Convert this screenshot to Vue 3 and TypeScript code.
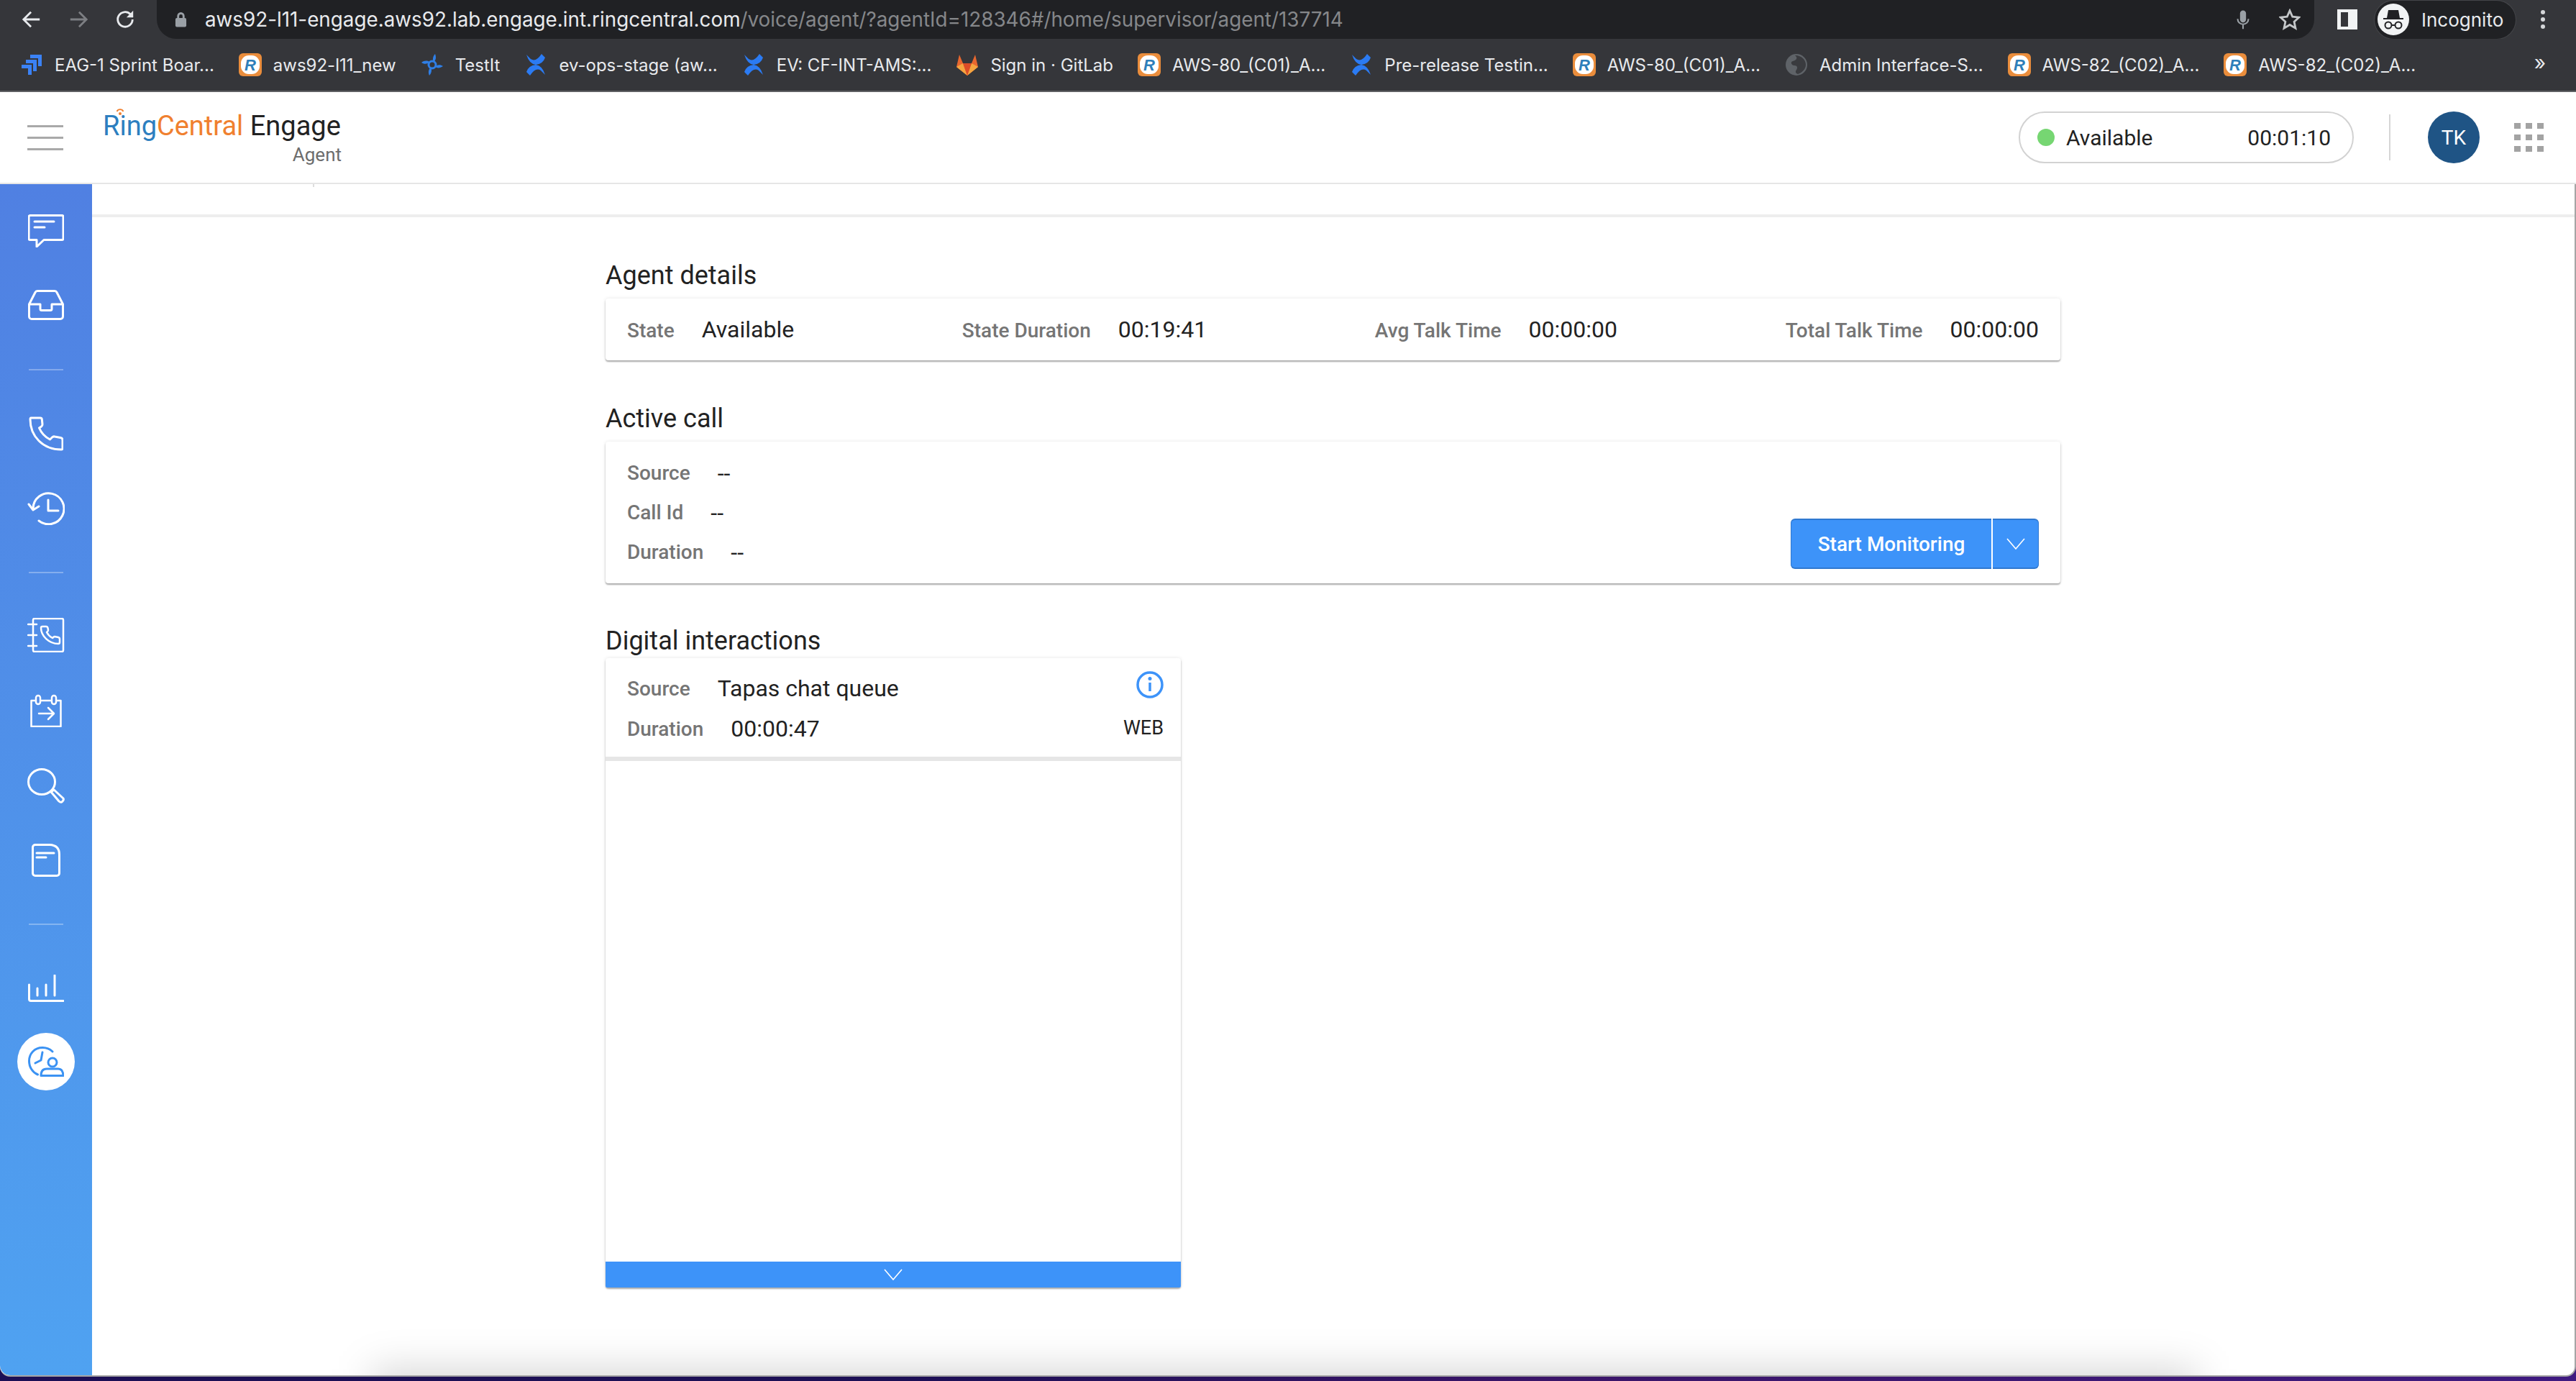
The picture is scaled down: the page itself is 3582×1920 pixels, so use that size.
<script setup lang="ts">
interface Bookmark {
  icon: string
  label: string
}

const bookmarks: Bookmark[] = [
  { icon: 'jira', label: 'EAG-1 Sprint Boar...' },
  { icon: 'rc', label: 'aws92-l11_new' },
  { icon: 'testit', label: 'TestIt' },
  { icon: 'conf', label: 'ev-ops-stage (aw...' },
  { icon: 'conf', label: 'EV: CF-INT-AMS:...' },
  { icon: 'gitlab', label: 'Sign in · GitLab' },
  { icon: 'rc', label: 'AWS-80_(C01)_A...' },
  { icon: 'conf', label: 'Pre-release Testin...' },
  { icon: 'rc', label: 'AWS-80_(C01)_A...' },
  { icon: 'globe', label: 'Admin Interface-S...' },
  { icon: 'rc', label: 'AWS-82_(C02)_A...' },
  { icon: 'rc', label: 'AWS-82_(C02)_A...' },
]

const agentStats = [
  { label: 'State', value: 'Available' },
  { label: 'State Duration', value: '00:19:41' },
  { label: 'Avg Talk Time', value: '00:00:00' },
  { label: 'Total Talk Time', value: '00:00:00' },
]

const callRows = [
  { label: 'Source', value: '--' },
  { label: 'Call Id', value: '--' },
  { label: 'Duration', value: '--' },
]
</script>

<template>
  <div class="screen">
    <div class="toolbar">
      <div class="nav">
        <svg class="nav-icon" viewBox="0 0 30 30"><path d="M27 15H4M14 4L3 15l11 11" /></svg>
        <svg class="nav-icon dim" viewBox="0 0 30 30"><path d="M3 15h23M16 4l11 11-11 11" /></svg>
        <svg class="nav-icon" viewBox="0 0 30 30"><path d="M26 15a11 11 0 1 1-3.200-7.800L26 11" /><path class="solid" d="M27 2v10H17z" /></svg>
      </div>
      <div class="omnibox">
        <svg class="lock" viewBox="0 0 18 24"><path d="M5 10V7a4 4 0 0 1 8 0v3" /><rect x="1" y="10" width="16" height="13" rx="2" /></svg>
        <span class="url">aws92-l11-engage.aws92.lab.engage.int.ringcentral.com<span class="url-rest">/voice/agent/?agentId=128346#/home/supervisor/agent/137714</span></span>
        <svg class="mic" viewBox="0 0 24 32"><rect x="7" y="1" width="10" height="20" rx="5" /><path d="M3 15c0 12 18 12 18 0M12 24v8" /></svg>
        <svg class="star" viewBox="0 0 32 32"><path d="M16 3l4 9 9.500 1-7 6.500 2 9.500-8.500-5-8.500 5 2-9.500-7-6.500 9.500-1z" /></svg>
      </div>
      <div class="panel-icon"></div>
      <div class="incognito">
        <svg class="spy" viewBox="0 0 44 44">
          <circle cx="22" cy="22" r="22" fill="#f1f3f4" />
          <path d="M15 9h14l2 11H13zM8 20h28v2H8z" fill="#202124" />
          <circle cx="15" cy="30" r="4.500" fill="none" stroke="#202124" stroke-width="2" />
          <circle cx="29" cy="30" r="4.500" fill="none" stroke="#202124" stroke-width="2" />
          <path d="M19 30h6" stroke="#202124" stroke-width="2" />
        </svg>
        <span>Incognito</span>
      </div>
      <div class="kebab"><i></i><i></i><i></i></div>
    </div>

    <div class="bookmarks">
      <div v-for="(b, i) in bookmarks" :key="i" class="bookmark">
        <svg class="fav" viewBox="0 0 32 32">
          <template v-if="b.icon === 'jira'">
            <path d="M14 2h16v16h-5V7H14zM8 9h15v16h-5V14H8zM2 16h14v14h-5V21H2z" fill="#3b82f6" />
          </template>
          <template v-else-if="b.icon === 'rc'">
            <rect width="32" height="32" rx="6" fill="#ea8d3c" />
            <rect x="3" y="3" width="26" height="26" rx="11" fill="#fff" />
            <text x="16" y="24" text-anchor="middle" class="fav-r">R</text>
          </template>
          <template v-else-if="b.icon === 'testit'">
            <circle cx="16" cy="16" r="5" fill="none" stroke="#2f7fe6" stroke-width="3" />
            <path d="M20 1c2 5 1 9-2 11-2-3-1-8 2-11zM31 18c-4 3-8 3-11 1 2-3 7-4 11-1zM12 31c-2-5-1-9 2-11 2 3 1 8-2 11zM1 13c4-3 8-3 11-1-2 3-7 4-11 1z" fill="#2f7fe6" />
          </template>
          <template v-else-if="b.icon === 'conf'">
            <path d="M3 2l6 6q7 5 15-7l5 5q-3 9-13 10Q7 15 3 2zM29 30l-6-6q-7-5-15 7l-5-5q3-9 13-10 9 1 13 14z" fill="#2b7bf3" />
          </template>
          <template v-else-if="b.icon === 'gitlab'">
            <path d="M16 31L1 19 5 2l5 12h12l5-12 4 17z" fill="#e8672f" />
            <path d="M16 31L1 19l9-5z M16 31l15-12-9-5z" fill="#f5a540" />
            <path d="M16 31l-6-17h12z" fill="#dc4c27" />
          </template>
          <template v-else>
            <circle cx="16" cy="16" r="15" fill="#5f6368" />
            <path d="M14 3c5 4 1 7-3 8s-2 6 2 6 5 3 3 6-1 5 2 6c6-2 11-7 11-13S24 3 14 3z" fill="#3a3b3f" />
          </template>
        </svg>
        <span>{{ b.label }}</span>
      </div>
      <span class="more">»</span>
    </div>

    <header class="app-header">
      <div class="burger"><i></i><i></i><i></i></div>
      <div class="logo">
        <svg class="logo-arc" viewBox="0 0 12 12"><path d="M1.500 5a5 5 0 0 1 9 0" /><circle cx="6" cy="8" r="2" /></svg>
        <div class="logo-main"><span class="ring">Ring</span><span class="central">Central</span> Engage</div>
        <div class="logo-sub">Agent</div>
      </div>
      <div class="status-pill">
        <span class="dot"></span>
        <span class="status-name">Available</span>
        <span class="status-time">00:01:10</span>
      </div>
      <div class="header-divider"></div>
      <div class="avatar">TK</div>
      <div class="apps">
        <i v-for="n in 9" :key="n"></i>
      </div>
    </header>

    <div class="body">
      <nav class="sidebar">
        <svg class="side-icon chat" viewBox="0 0 50 46"><path d="M3 1.500h44a2 2 0 0 1 2 2v30a2 2 0 0 1-2 2H22L12 45V35.500H3a2 2 0 0 1-2-2v-30a2 2 0 0 1 2-2zM9 10h27M9 18h14" /></svg>
        <svg class="side-icon inbox" viewBox="0 0 50 42"><path d="M1.500 20L10 3.500Q11 1.500 13 1.500h24q2 0 3 2L48.500 20v17a3.500 3.500 0 0 1-3.500 3.500H5A3.500 3.500 0 0 1 1.500 37zM1.500 20H17v6.500q0 2 2 2h12q2 0 2-2V20h15.500" /></svg>
        <span class="side-sep first"></span>
        <svg class="side-icon phone" viewBox="0 0 48 48"><path d="M3 2h13q2 0 2.300 2l.7 7q0 2-1.500 3l-3 2c3 7 9 13 15 16l3-3q1.500-1.500 3.500-1l8 1.500q3 .5 3 3V44q0 2-2 2C20 46 2 28 2 4q0-2 1-2z" /></svg>
        <svg class="side-icon history" viewBox="0 0 52 46"><path d="M8 23A21.500 21.500 0 1 1 16 40M2 17l6 8 8-5M29 11v15h14" /></svg>
        <span class="side-sep second"></span>
        <svg class="side-icon book thin" viewBox="0 0 52 48"><path d="M8 3q0-2 2-2h38q2 0 2 2v42q0 2-2 2H10q-2 0-2-2zM1 9h12M1 24h12M1 39h12M21 12h5q2 0 2.500 2l.5 3q0 1.500-2 3c2 4 4 6 8 8q2-2 3-2l5 1q2 .5 2 2.500V34q0 2-2 2C30 36 19 25 19 14q0-2 2-2z" /></svg>
        <svg class="side-icon cal thin" viewBox="0 0 44 46"><path d="M1.500 9h41v36h-41z" /><rect class="ring-fill" x="8" y="2" width="6" height="12" rx="3" /><rect class="ring-fill" x="30" y="2" width="6" height="12" rx="3" /><path d="M12 27h20M25 19l8 8-8 8" /></svg>
        <svg class="side-icon search" viewBox="0 0 52 50"><ellipse cx="20" cy="19" rx="18.500" ry="17.500" /><path d="M33 33l4-3 13 12q1 2-1 4l-1 1q-2 1-4-1z" /></svg>
        <svg class="side-icon note" viewBox="0 0 40 46"><path d="M5 1.500h20Q38.500 2 38.500 15v26a3.500 3.500 0 0 1-3.500 3.500H5A3.500 3.500 0 0 1 1.500 41V5A3.500 3.500 0 0 1 5 1.500zM7 13h24M7 19h13" /></svg>
        <span class="side-sep third"></span>
        <svg class="side-icon chart" viewBox="0 0 50 38"><path d="M1.500 14v20q0 2.500 2.500 2.500h45M13 19v10M25 14v15M37 1v28" /></svg>
        <div class="side-active">
          <svg viewBox="0 0 50 42"><path d="M34 7A20 20 0 0 0 20 1.500C9 1.500 1.500 10 1.500 20c0 9 5 16 12 19" /><path d="M20 8l-2 11-8 4" /><circle cx="34" cy="22" r="6" /><path d="M18 40.500q0-9.500 8-9.500h16q6.500 0 7 9.500z" /></svg>
        </div>
      </nav>

      <main class="content">
        <div class="subbar"><span class="tick"></span></div>
        <div class="sections">
          <h2 class="title first-title">Agent details</h2>
          <section class="card agent-card">
            <div v-for="s in agentStats" :key="s.label" class="stat">
              <span class="label">{{ s.label }}</span>
              <span class="value">{{ s.value }}</span>
            </div>
          </section>

          <h2 class="title call-title">Active call</h2>
          <section class="card call-card">
            <div class="call-rows">
              <div v-for="r in callRows" :key="r.label" class="stat">
                <span class="label">{{ r.label }}</span>
                <span class="value">{{ r.value }}</span>
              </div>
            </div>
            <div class="split">
              <button class="split-main">Start Monitoring</button>
              <button class="split-arrow">
                <svg viewBox="0 0 28 16"><path d="M2 1l12 14L26 1" /></svg>
              </button>
            </div>
          </section>

          <h2 class="title digital-title">Digital interactions</h2>
          <section class="card digital-card">
            <div class="digital-head">
              <div class="digital-rows">
                <div class="stat">
                  <span class="label">Source</span>
                  <span class="value">Tapas chat queue</span>
                </div>
                <div class="stat">
                  <span class="label">Duration</span>
                  <span class="value">00:00:47</span>
                </div>
              </div>
              <div class="digital-side">
                <svg class="info" viewBox="0 0 38 38"><circle cx="19" cy="19" r="17" /><path d="M19 16v12" /><circle class="info-dot" cx="19" cy="10.500" r="2.500" /></svg>
                <span class="channel">WEB</span>
              </div>
            </div>
            <div class="digital-body"></div>
            <div class="digital-foot">
              <svg viewBox="0 0 28 16"><path d="M2 1l12 14L26 1" /></svg>
            </div>
          </section>
        </div>
        <div class="bottom-fade"></div>
      </main>
    </div>
  </div>
</template>

<style>
html,
body {
  margin: 0;
  background: #2a1260;
}
</style>

<style scoped>
.screen {
  width: 3582px;
  height: 1920px;
  overflow: hidden;
  display: flex;
  flex-direction: column;
  font-family: Roboto, "Liberation Sans", sans-serif;
  background: linear-gradient(90deg, #1c0f55 0%, #1c0f55 35%, #3a1468 60%, #3f1a80 100%);
}

.toolbar {
  height: 54px;
  display: flex;
  align-items: center;
  background: #35363a;
  flex: none;
  font-family: Inter, "Liberation Sans", sans-serif;
}

.nav {
  width: 218px;
  display: flex;
  align-items: center;
  gap: 37px;
  padding-left: 30px;
  box-sizing: border-box;
  flex: none;
}

.nav-icon {
  width: 28px;
  height: 28px;
  fill: none;
  stroke: #e8eaed;
  stroke-width: 3;
}

.nav-icon.dim {
  stroke: #7d7f83;
}

.nav-icon .solid {
  fill: #e8eaed;
  stroke: none;
}

.omnibox {
  width: 3000px;
  height: 54px;
  flex: none;
  display: flex;
  align-items: center;
  background: #202124;
  border-radius: 0 0 27px 27px;
  padding-left: 25px;
  padding-right: 19px;
  box-sizing: border-box;
}

.lock {
  width: 17px;
  height: 24px;
  flex: none;
  margin-right: 25px;
}

.lock path {
  fill: none;
  stroke: #9aa0a6;
  stroke-width: 3;
}

.lock rect {
  fill: #9aa0a6;
}

.url {
  font-size: 27.800px;
  color: #e8eaed;
  white-space: nowrap;
  flex: 1;
}

.url-rest {
  color: #85878a;
}

.mic {
  width: 20px;
  height: 28px;
  flex: none;
  margin-right: 40px;
}

.mic rect {
  fill: #9aa0a6;
}

.mic path {
  fill: none;
  stroke: #9aa0a6;
  stroke-width: 2.500;
}

.star {
  width: 30px;
  height: 30px;
  flex: none;
  fill: none;
  stroke: #c4c7c9;
  stroke-width: 3;
}

.panel-icon {
  width: 28px;
  height: 28px;
  box-sizing: border-box;
  border: 4px solid #f1f3f4;
  border-left-width: 5px;
  border-right-width: 13px;
  margin-left: 32px;
  flex: none;
}

.incognito {
  margin-left: 24px;
  width: 196px;
  height: 53px;
  box-sizing: border-box;
  border-radius: 27px;
  background: #202124;
  box-shadow: 0 0 0 1px #45464a;
  display: flex;
  align-items: center;
  gap: 17px;
  padding-left: 4px;
  color: #e8eaed;
  font-size: 26px;
  flex: none;
}

.spy {
  width: 44px;
  height: 44px;
  flex: none;
}

.kebab {
  margin-left: 35px;
  display: flex;
  flex-direction: column;
  gap: 4px;
}

.kebab i {
  width: 6px;
  height: 6px;
  border-radius: 50%;
  background: #d5d7d9;
}

.bookmarks {
  height: 74px;
  box-sizing: border-box;
  flex: none;
  display: flex;
  align-items: center;
  gap: 34px;
  padding-left: 28px;
  background: #35363a;
  border-bottom: 2px solid #5f6063;
  position: relative;
  font-family: Inter, "Liberation Sans", sans-serif;
}

.bookmark {
  display: flex;
  align-items: center;
  gap: 16px;
  color: #e8eaed;
  font-size: 24px;
  white-space: nowrap;
}

.fav {
  width: 32px;
  height: 32px;
  flex: none;
}

.fav-r {
  font-family: "Liberation Sans", sans-serif;
  font-size: 22px;
  font-weight: 700;
  font-style: italic;
  fill: #2f7fba;
}

.more {
  position: absolute;
  right: 42px;
  top: 16px;
  color: #e8eaed;
  font-size: 28px;
}

.app-header {
  height: 128px;
  box-sizing: border-box;
  flex: none;
  background: #fff;
  border-bottom: 2px solid #e6e6e6;
  display: flex;
  align-items: center;
  padding-right: 45px;
}

.burger {
  margin-left: 38px;
  width: 50px;
  display: flex;
  flex-direction: column;
  gap: 13px;
}

.burger i {
  height: 3px;
  background: #a9a9a9;
}

.logo {
  margin-left: 55px;
  width: 332px;
  display: flex;
  flex-direction: column;
  margin-top: 1px;
  position: relative;
}

.logo-arc {
  position: absolute;
  left: 18px;
  top: -3px;
  width: 12px;
  height: 12px;
  fill: none;
  stroke: #f0802f;
  stroke-width: 1.800;
}

.logo-arc circle {
  fill: #f0802f;
  stroke: none;
}

.logo-main {
  font-size: 38px;
  line-height: 44px;
  color: #222;
  white-space: nowrap;
}

.ring {
  color: #2d7fc0;
}

.central {
  color: #f0802f;
}

.logo-sub {
  align-self: flex-end;
  font-size: 26px;
  line-height: 32px;
  color: #6d6d6d;
  margin-top: 2px;
}

.status-pill {
  margin-left: auto;
  width: 466px;
  height: 72px;
  box-sizing: border-box;
  border: 2px solid #d2d2d2;
  border-radius: 36px;
  display: flex;
  align-items: center;
  padding: 0 30px 0 24px;
  font-size: 30px;
  color: #222;
}

.dot {
  width: 24px;
  height: 24px;
  border-radius: 50%;
  background: #76d672;
  margin-right: 16px;
}

.status-time {
  margin-left: auto;
}

.header-divider {
  width: 2px;
  height: 64px;
  background: #d6d6d6;
  margin-left: 49px;
}

.avatar {
  width: 72px;
  height: 72px;
  margin-left: 52px;
  border-radius: 50%;
  background: #1f5485;
  color: #fff;
  font-size: 28px;
  display: flex;
  align-items: center;
  justify-content: center;
}

.apps {
  margin-left: 48px;
  width: 41px;
  display: grid;
  grid-template-columns: repeat(3, 9px);
  grid-auto-rows: 8px;
  justify-content: space-between;
  row-gap: 8px;
}

.apps i {
  background: #a3a3a3;
}

.body {
  flex: none;
  height: 1656px;
  display: flex;
  background: #fff;
  border-radius: 0 0 14px 14px;
  border-bottom: 2px solid #a5a5a5;
  border-right: 2px solid #a5a5a5;
  box-sizing: content-box;
  width: 3580px;
  overflow: hidden;
}

.sidebar {
  width: 128px;
  flex: none;
  display: flex;
  flex-direction: column;
  align-items: center;
  background: linear-gradient(180deg, #5080e2 0%, #4fa2f1 100%);
  border-bottom-left-radius: 14px;
}

.side-icon {
  flex: none;
  fill: none;
  stroke: #fff;
  stroke-width: 3;
  stroke-linecap: round;
  stroke-linejoin: round;
}

.side-icon.thin {
  stroke-width: 2.500;
}

.ring-fill {
  fill: #508ae6;
}

.chat {
  width: 50px;
  height: 46px;
  margin-top: 42px;
}

.inbox {
  width: 50px;
  height: 42px;
  margin-top: 59px;
}

.side-sep {
  width: 48px;
  height: 2px;
  flex: none;
  background: rgba(255, 255, 255, 0.3);
}

.side-sep.first {
  margin-top: 68px;
}

.phone {
  width: 48px;
  height: 48px;
  margin-top: 64px;
}

.history {
  width: 52px;
  height: 46px;
  margin-top: 57px;
}

.side-sep.second {
  margin-top: 65px;
}

.book {
  width: 52px;
  height: 48px;
  margin-top: 62px;
}

.cal {
  width: 44px;
  height: 46px;
  margin-top: 58px;
}

.search {
  width: 52px;
  height: 50px;
  margin-top: 57px;
}

.note {
  width: 40px;
  height: 46px;
  margin-top: 55px;
}

.side-sep.third {
  margin-top: 65px;
}

.chart {
  width: 50px;
  height: 38px;
  margin-top: 69px;
}

.side-active {
  width: 80px;
  height: 80px;
  margin-top: 43px;
  border-radius: 50%;
  background: #fff;
  flex: none;
  display: flex;
  align-items: center;
  justify-content: center;
}

.side-active svg {
  width: 50px;
  height: 42px;
  fill: none;
  stroke: #3b92f3;
  stroke-width: 3;
  stroke-linecap: round;
  stroke-linejoin: round;
}

.content {
  flex: 1;
  position: relative;
  display: flex;
  flex-direction: column;
  min-width: 0;
}

.subbar {
  height: 46px;
  flex: none;
  box-sizing: border-box;
  border-bottom: 4px solid #eee;
  position: relative;
}

.tick {
  position: absolute;
  left: 307px;
  top: 0;
  width: 2px;
  height: 4px;
  background: #ddd;
}

.sections {
  margin-left: 714px;
  width: 2023px;
  display: flex;
  flex-direction: column;
}

.title {
  margin: 0;
  font-size: 36px;
  line-height: 44px;
  font-weight: 400;
  color: #222;
}

.first-title {
  margin-top: 59px;
}

.call-title {
  margin-top: 59px;
}

.digital-title {
  margin-top: 58px;
}

.card {
  background: #fff;
  border-radius: 4px;
  box-shadow: 0 2px 2px rgba(0, 0, 0, 0.3), 0 0 5px rgba(0, 0, 0, 0.1);
  box-sizing: border-box;
}

.agent-card {
  height: 86px;
  margin-top: 10px;
  padding: 0 30px;
  display: flex;
  align-items: center;
  justify-content: space-between;
}

.stat {
  display: flex;
  align-items: baseline;
  gap: 38px;
}

.label {
  font-size: 28px;
  font-weight: 500;
  color: #757575;
}

.value {
  font-size: 32px;
  color: #222;
}

.call-card {
  height: 197px;
  margin-top: 10px;
  padding: 0 30px;
  display: flex;
  justify-content: space-between;
  align-items: flex-end;
}

.call-rows {
  align-self: center;
  display: flex;
  flex-direction: column;
  gap: 17px;
}

.call-rows .stat {
  height: 38px;
  align-items: center;
}

.split {
  display: flex;
  gap: 2px;
  margin-bottom: 20px;
}

.split button {
  height: 70px;
  background: #3d93f9;
  border: none;
  border-top: 2px solid #2f78d0;
  border-bottom: 2px solid #2f78d0;
  color: #fff;
  font-family: inherit;
  font-size: 28px;
  font-weight: 500;
  padding: 0;
}

.split-main {
  width: 279px;
  border-left: 1px solid #2f78d0 !important;
  border-radius: 6px 0 0 6px;
}

.split-arrow {
  width: 64px;
  border-right: 1px solid #2f78d0 !important;
  border-radius: 0 6px 6px 0;
  display: flex;
  align-items: center;
  justify-content: center;
}

.split-arrow svg,
.digital-foot svg {
  width: 28px;
  height: 16px;
  fill: none;
  stroke: #fff;
  stroke-width: 1.600;
}

.digital-card {
  width: 800px;
  height: 875px;
  margin-top: 2px;
  display: flex;
  flex-direction: column;
}

.digital-head {
  height: 137px;
  flex: none;
  box-sizing: border-box;
  padding: 0 24px 0 30px;
  display: flex;
  justify-content: space-between;
}

.digital-rows {
  padding-top: 22px;
  display: flex;
  flex-direction: column;
  gap: 16px;
}

.digital-rows .stat {
  height: 40px;
  align-items: center;
}

.digital-side {
  display: flex;
  flex-direction: column;
  align-items: flex-end;
  padding-top: 18px;
}

.info {
  width: 38px;
  height: 38px;
  fill: none;
  stroke: #3d93f9;
  stroke-width: 3.500;
}

.info-dot {
  fill: #3d93f9;
  stroke: none;
}

.channel {
  margin-top: 25px;
  font-size: 27px;
  color: #222;
}

.digital-body {
  flex: 1;
  border-top: 6px solid #e6e6e6;
}

.digital-foot {
  height: 36px;
  flex: none;
  background: #3d93f9;
  display: flex;
  align-items: center;
  justify-content: center;
  border-radius: 0 0 2px 2px;
}

.bottom-fade {
  position: absolute;
  left: 389px;
  right: 525px;
  bottom: -51px;
  height: 60px;
  background: rgba(0, 0, 0, 0.155);
  filter: blur(27px);
}
</style>
